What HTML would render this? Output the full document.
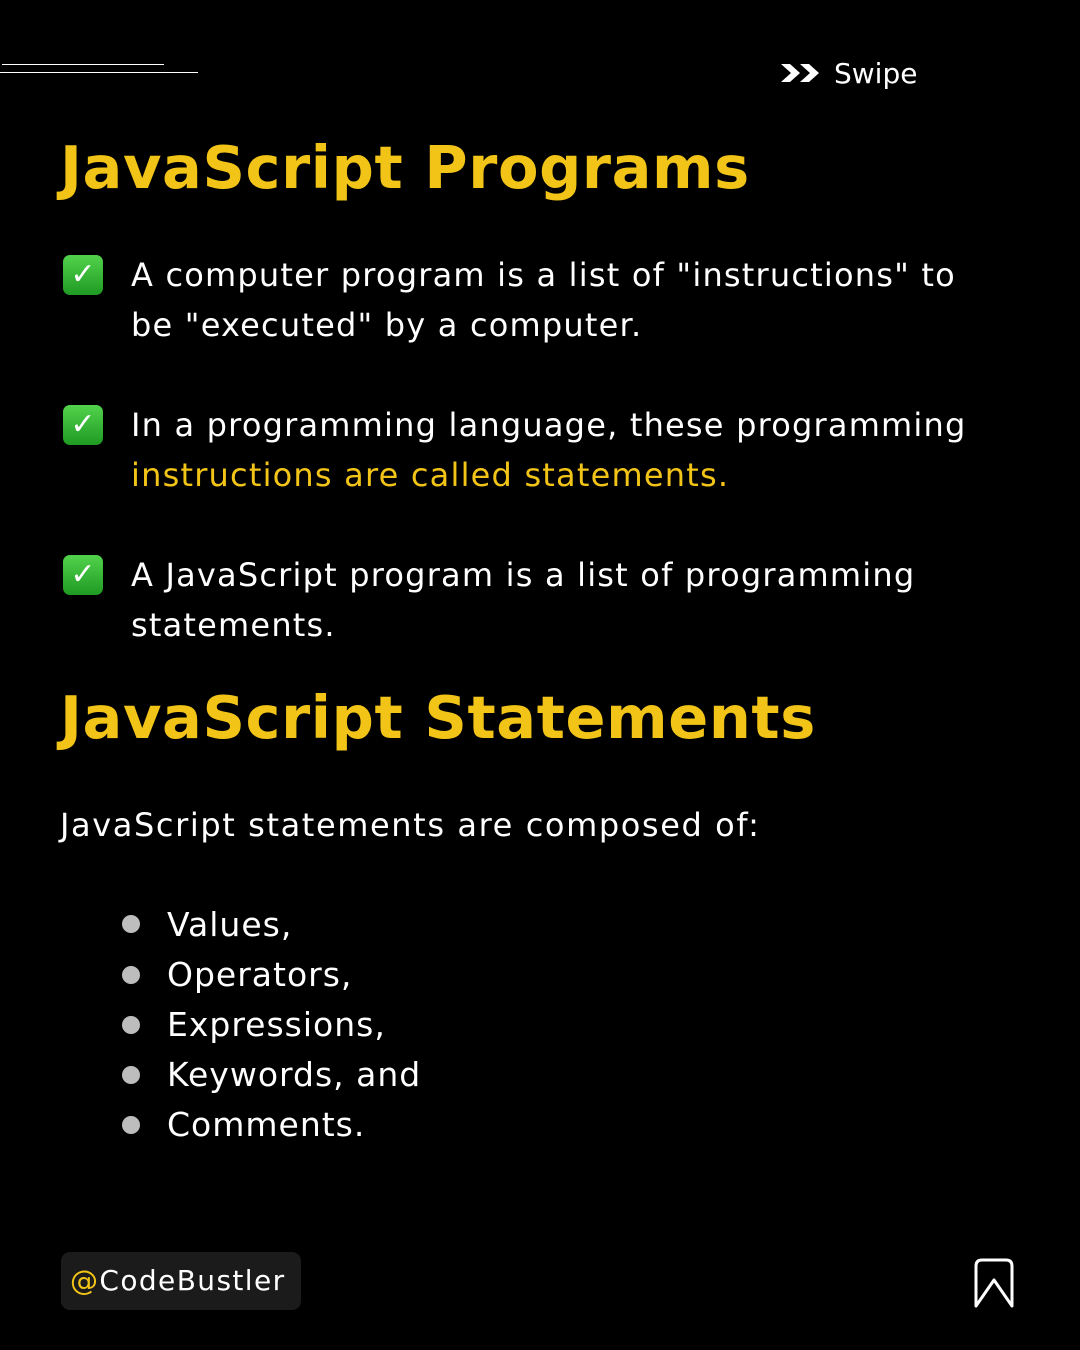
<!DOCTYPE html>
<html><head><style>
body{margin:0;width:1080px;height:1350px;background:#000;position:relative;overflow:hidden;font-family:"DejaVu Sans","Liberation Sans",sans-serif;color:#fff}
.a{position:absolute;white-space:nowrap}
h1{position:absolute;left:60px;margin:0;font-size:59px;font-weight:bold;color:#f2c417;white-space:nowrap;letter-spacing:0.6px}
.item{position:absolute;left:131px;font-size:32px;line-height:50px;letter-spacing:1.2px;white-space:nowrap}
.chk{position:absolute;left:63px;width:40px;height:40px;border-radius:7px;background:linear-gradient(#52d24c,#1f9a23);color:#fff;font-size:30px;line-height:40px;text-align:center;font-weight:bold}
.bul{position:absolute;left:167px;font-size:33px;line-height:50px;letter-spacing:1px}
.dot{position:absolute;left:122px;width:18px;height:18px;border-radius:50%;background:#bdbdbd}
</style></head><body>
<div class="a" style="left:2px;top:64px;width:162px;height:1px;background:#fff"></div>
<div class="a" style="left:0;top:72px;width:198px;height:1px;background:#fff"></div>
<svg class="a" style="left:779px;top:62px" width="44" height="22" viewBox="0 0 44 22"><path d="M2 2h9l10 9-10 9H2l10-9z M21 2h9l10 9-10 9h-9l10-9z" fill="#fff"/></svg>
<div class="a" style="left:834px;top:57px;font-size:28px">Swipe</div>
<h1 style="top:133px">JavaScript Programs</h1>
<div class="chk" style="top:255px">✓</div>
<div class="item" style="top:250px">A computer program is a list of "instructions" to<br>be "executed" by a computer.</div>
<div class="chk" style="top:405px">✓</div>
<div class="item" style="top:400px">In a programming language, these programming<br><span style="color:#f2c417">instructions are called statements.</span></div>
<div class="chk" style="top:555px">✓</div>
<div class="item" style="top:550px">A JavaScript program is a list of programming<br>statements.</div>
<h1 style="top:683px">JavaScript Statements</h1>
<div class="item" style="left:60px;top:800px;letter-spacing:1.6px">JavaScript statements are composed of:</div>
<div class="dot" style="top:915px"></div><div class="bul" style="top:900px">Values,</div>
<div class="dot" style="top:966px"></div><div class="bul" style="top:950px">Operators,</div>
<div class="dot" style="top:1016px"></div><div class="bul" style="top:1000px">Expressions,</div>
<div class="dot" style="top:1066px"></div><div class="bul" style="top:1050px">Keywords, and</div>
<div class="dot" style="top:1116px"></div><div class="bul" style="top:1100px">Comments.</div>
<div class="a" style="left:61px;top:1252px;width:240px;height:58px;border-radius:9px;background:#1b1b1b"></div>
<div class="a" style="left:70px;top:1264px;font-size:28px;letter-spacing:1.4px"><span style="color:#f2c417">@</span>CodeBustler</div>
<svg class="a" style="left:972px;top:1256px" width="44" height="54" viewBox="0 0 44 54"><path d="M4 50V10q0-6 6-6h24q6 0 6 6v40L22 24z" fill="none" stroke="#fff" stroke-width="3" stroke-linejoin="round"/></svg>
</body></html>
